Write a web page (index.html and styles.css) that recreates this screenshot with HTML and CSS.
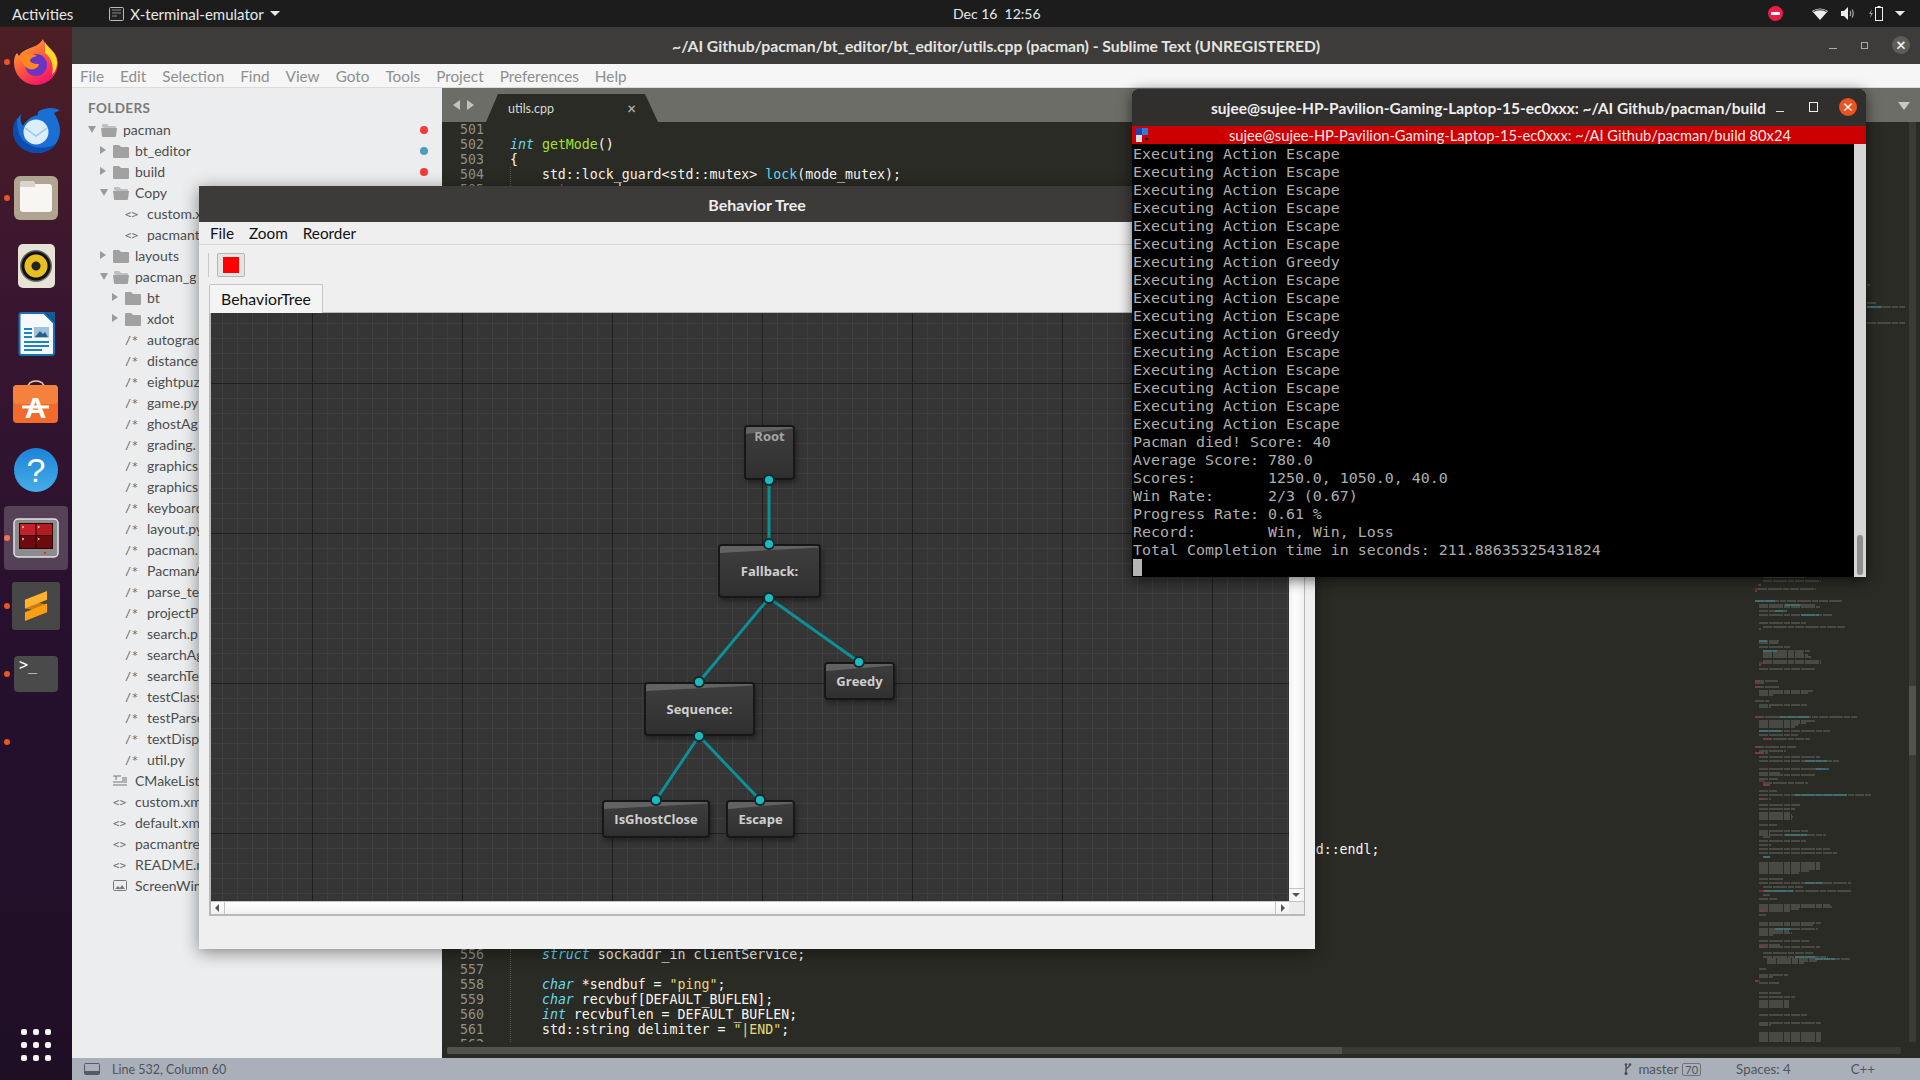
FILE: index.html
```html
<!DOCTYPE html>
<html lang="en">
<head>
  <meta charset="UTF-8"/>
  <title>Behavior Tree - Ubuntu desktop</title>
  <link rel="stylesheet" href="styles.css">
</head>
<body>
  <!-- shared folder icons -->
  <svg class="defs" width="0" height="0">
    <symbol id="fold" viewBox="0 0 16 14"><path d="M0 2q0-1 1-1h5l2 2h7q1 0 1 1v9q0 1-1 1H1q-1 0-1-1z"/></symbol>
    <symbol id="fold-open" viewBox="0 0 16 14"><path d="M1 4V2q0-1 1-1h4l2 2h6q1 0 1 1v1H3z" opacity=".6"/><path d="M0 5h16l-1 8q0 1-1 1H2q-1 0-1-1z"/></symbol>
  </svg>

  <!-- top bar -->
  <header class="topbar">
    <span class="activities">Activities</span>
    <span class="app-menu">
      <svg width="15" height="14" viewBox="0 0 15 14"><rect x=".5" y=".5" width="14" height="13" rx="1" fill="#222" stroke="#bbb"/><path d="M3 3h9M3 6h9M3 9h5" stroke="#888"/></svg>
      X-terminal-emulator
      <i class="caret"></i>
    </span>
    <span class="clock">Dec 16&nbsp;&nbsp;12:56</span>
    <span class="tray">
      <svg class="t-noentry" width="15" height="15" viewBox="0 0 15 15"><circle cx="7.5" cy="7.5" r="7.5" fill="#ed1c47"/><rect x="3" y="6" width="9" height="3" fill="#fff"/></svg>
      <svg class="t-wifi" width="16" height="12" viewBox="0 0 16 12"><path d="M0 3Q8-2 16 3L8 12z" fill="#eee"/><path d="M1.5 3.5Q8 0 14.500 3.500" fill="none" stroke="#1c1c1c"/></svg>
      <svg class="t-vol" width="14" height="13" viewBox="0 0 14 13"><path d="M0 4h3l4-4v13l-4-4H0z" fill="#eee"/><path d="M9 4q1.500 2.500 0 5M11 2.500q2.500 4 0 8" fill="none" stroke="#aaa" stroke-width="1.200"/></svg>
      <svg class="t-bat" width="15" height="15" viewBox="0 0 15 15"><path d="M3 3 0 8h2l-1 4 3-5H2z" fill="#999"/><path d="M8.500 0h3v1h-3z" fill="#eee"/><rect x="6.500" y="1.500" width="7" height="13" fill="none" stroke="#eee"/></svg>
      <i class="caret t-caret"></i>
    </span>
  </header>

  <div class="desk">
    <!-- dock -->
    <nav class="dock">
      <div class="slot run">
        <svg width="46" height="46" viewBox="0 0 46 46">
          <defs>
            <linearGradient id="ff" x1="0" y1="0" x2=".6" y2="1"><stop offset="0" stop-color="#ffbd30"/><stop offset=".55" stop-color="#ff5a3c"/><stop offset="1" stop-color="#f5156c"/></linearGradient>
          </defs>
          <path d="M30 0c1 6 15 12 15 24a22 22 0 1 1-44 0c0-5 1-8 3-10l2 3c2-4 6-6 9-7 4-2 11-3 15-10z" fill="url(#ff)"/>
          <path d="M32 3c1 5 12 10 12 20 0 6-2 10-5 13 2-8 0-17-7-22z" fill="#ffd92e"/>
          <circle cx="23" cy="26" r="11" fill="#6b34c4"/>
          <path d="M7 19c5-5 13-5 17-2-5 1-7 3-7 5 2 3 7 3 9 3-1 5-7 7-12 4-3-2-5-6-7-10z" fill="#ff8a1c"/>
        </svg>
      </div>
      <div class="slot">
        <svg width="49" height="46" viewBox="0 0 49 46">
          <path d="M32 2c5-2 11-1 16 1l-6 3c4 6 6 12 6 18a23 22 0 0 1-46 0c0-5 1-10 4-13l3-4c-1 6 0 9 2 12 3-6 9-10 15-11-1-3 1-5 6-6z" fill="#1a6fd4"/>
          <path d="M1 24c0 12 10 22 24 22 8 0 15-3 19-9-9 5-20 5-28 0C9 33 5 26 5 12 2 15 1 19 1 24z" fill="#0b4cae"/>
          <circle cx="24" cy="25" r="12.500" fill="#dceefc"/>
          <path d="M13 21l11 8 11-8" fill="none" stroke="#9cc6ec" stroke-width="1.500"/>
        </svg>
      </div>
      <div class="slot run">
        <div class="ic-files"><span class="ic-folder"></span></div>
      </div>
      <div class="slot">
        <div class="ic-rhythm"><span class="ic-cone"></span></div>
      </div>
      <div class="slot">
        <svg width="37" height="44" viewBox="0 0 37 44">
          <path d="M1.500 3q0-2 2-2H26l10 10v30q0 2-2 2H3.500q-2 0-2-2z" fill="#f6f8fa" stroke="#1273b5" stroke-width="2"/>
          <path d="M27 0h10v10z" fill="#0f5f96"/>
          <path d="M6 17h8M6 21h8M6 25h8M6 30h25M6 34h25M6 38h18" stroke="#1b82c5" stroke-width="2"/>
          <rect x="16" y="15" width="15" height="11" fill="#9ec3de"/>
          <path d="M17 25l5-6 3 3 2-2 3 5z" fill="#2b5f87"/>
        </svg>
      </div>
      <div class="slot">
        <svg width="46" height="44" viewBox="0 0 46 44">
          <path d="M15 8q0-7 8-7t8 7" fill="none" stroke="#f4c9a8" stroke-width="1.500"/>
          <rect y="5" width="45" height="38" rx="4" fill="#f26b2a"/>
          <rect y="5" width="45" height="19" rx="4" fill="#f5813d"/>
          <text class="ic-a" x="22.500" y="38">A</text>
          <path d="M9 27h27" stroke="#fff" stroke-width="3"/>
        </svg>
      </div>
      <div class="slot">
        <div class="ic-help">?</div>
      </div>
      <div class="slot run active">
        <svg width="46" height="40" viewBox="0 0 46 40">
          <rect x="1" y="1" width="44" height="38" rx="4" fill="#8b8d8c" stroke="#e3e3e3" stroke-width="1.500"/>
          <rect x="6" y="5" width="34" height="26" fill="#2a0505"/>
          <rect x="7" y="6" width="15.500" height="11" fill="#c2202a"/>
          <rect x="23.500" y="6" width="15.500" height="11" fill="#b31a22"/>
          <rect x="7" y="18" width="15.500" height="12" fill="#6d0a0e"/>
          <rect x="23.500" y="18" width="15.500" height="12" fill="#6d0a0e"/>
          <path d="M9 8l2 1-2 1M24.500 8l2 1-2 1M9 20l2 1-2 1M24.500 20l2 1-2 1" fill="none" stroke="#fff" stroke-width=".7"/>
          <circle cx="32" cy="35" r="1.200" fill="#ef2b2b"/>
        </svg>
      </div>
      <div class="slot run">
        <div class="ic-sublime">
          <svg width="24" height="30" viewBox="0 0 26 24" preserveAspectRatio="none"><path d="M1 7l24 4v6L1 14z" fill="#c77d12"/><path d="M25 0v7L1 14V7z" fill="#ffb32c"/><path d="M1 17l24-7v7L1 24z" fill="#ff9f14"/></svg>
        </div>
      </div>
      <div class="slot run">
        <div class="ic-term">&gt;_</div>
      </div>
      <div class="slot run"></div>
      <div class="apps-btn">
        <i></i><i></i><i></i><i></i><i></i><i></i><i></i><i></i><i></i>
      </div>
    </nav>

    <!-- sublime text -->
    <section class="sublime">
      <div class="wm-title">
        <span>~/AI Github/pacman/bt_editor/bt_editor/utils.cpp (pacman) - Sublime Text (UNREGISTERED)</span>
        <div class="wm-btns">
          <i class="b-min"></i><i class="b-max"></i><i class="b-close">×</i>
        </div>
      </div>
      <div class="menubar">
        <span>File</span><span>Edit</span><span>Selection</span><span>Find</span><span>View</span><span>Goto</span><span>Tools</span><span>Project</span><span>Preferences</span><span>Help</span>
      </div>

      <div class="main">
        <aside class="sidebar">
          <div class="side-head">FOLDERS</div>
          <div class="row d0"><i class="tw open"></i><svg class="fic"><use href="#fold-open"/></svg><span>pacman</span><b class="dot red"></b></div>
          <div class="row d1"><i class="tw"></i><svg class="fic"><use href="#fold"/></svg><span>bt_editor</span><b class="dot teal"></b></div>
          <div class="row d1"><i class="tw"></i><svg class="fic"><use href="#fold"/></svg><span>build</span><b class="dot red"></b></div>
          <div class="row d1"><i class="tw open"></i><svg class="fic"><use href="#fold-open"/></svg><span>Copy</span></div>
          <!-- names below stop where the behavior tree window covers them -->
          <div class="row d2"><i class="tw none"></i><em>&lt;&gt;</em><span>custom.x</span></div>
          <div class="row d2"><i class="tw none"></i><em>&lt;&gt;</em><span>pacmant</span></div>
          <div class="row d1"><i class="tw"></i><svg class="fic"><use href="#fold"/></svg><span>layouts</span></div>
          <div class="row d1"><i class="tw open"></i><svg class="fic"><use href="#fold-open"/></svg><span>pacman_g</span></div>
          <div class="row d2"><i class="tw"></i><svg class="fic"><use href="#fold"/></svg><span>bt</span></div>
          <div class="row d2"><i class="tw"></i><svg class="fic"><use href="#fold"/></svg><span>xdot</span></div>
          <div class="row d2"><i class="tw none"></i><em>/*</em><span>autograd</span></div>
          <div class="row d2"><i class="tw none"></i><em>/*</em><span>distance</span></div>
          <div class="row d2"><i class="tw none"></i><em>/*</em><span>eightpuz</span></div>
          <div class="row d2"><i class="tw none"></i><em>/*</em><span>game.py</span></div>
          <div class="row d2"><i class="tw none"></i><em>/*</em><span>ghostAg</span></div>
          <div class="row d2"><i class="tw none"></i><em>/*</em><span>grading.</span></div>
          <div class="row d2"><i class="tw none"></i><em>/*</em><span>graphics</span></div>
          <div class="row d2"><i class="tw none"></i><em>/*</em><span>graphics</span></div>
          <div class="row d2"><i class="tw none"></i><em>/*</em><span>keyboard</span></div>
          <div class="row d2"><i class="tw none"></i><em>/*</em><span>layout.py</span></div>
          <div class="row d2"><i class="tw none"></i><em>/*</em><span>pacman.</span></div>
          <div class="row d2"><i class="tw none"></i><em>/*</em><span>PacmanA</span></div>
          <div class="row d2"><i class="tw none"></i><em>/*</em><span>parse_te</span></div>
          <div class="row d2"><i class="tw none"></i><em>/*</em><span>projectP</span></div>
          <div class="row d2"><i class="tw none"></i><em>/*</em><span>search.p</span></div>
          <div class="row d2"><i class="tw none"></i><em>/*</em><span>searchAg</span></div>
          <div class="row d2"><i class="tw none"></i><em>/*</em><span>searchTe</span></div>
          <div class="row d2"><i class="tw none"></i><em>/*</em><span>testClass</span></div>
          <div class="row d2"><i class="tw none"></i><em>/*</em><span>testParse</span></div>
          <div class="row d2"><i class="tw none"></i><em>/*</em><span>textDisp</span></div>
          <div class="row d2"><i class="tw none"></i><em>/*</em><span>util.py</span></div>
          <div class="row d1"><i class="tw none"></i>
            <svg class="pic" width="14" height="11" viewBox="0 0 14 11"><path d="M0 1h8M3 1v4M9 3h5M9 5h5M0 7h14M0 10h14" fill="none" stroke="#777"/></svg>
            <span>CMakeLists</span></div>
          <div class="row d1"><i class="tw none"></i><em>&lt;&gt;</em><span>custom.xm</span></div>
          <div class="row d1"><i class="tw none"></i><em>&lt;&gt;</em><span>default.xm</span></div>
          <div class="row d1"><i class="tw none"></i><em>&lt;&gt;</em><span>pacmantre</span></div>
          <div class="row d1"><i class="tw none"></i><em>&lt;&gt;</em><span>README.m</span></div>
          <div class="row d1"><i class="tw none"></i>
            <svg class="pic" width="14" height="11" viewBox="0 0 14 11"><rect x=".5" y=".5" width="13" height="10" rx="1" fill="none" stroke="#777"/><path d="M2 9l3-3 2 2 2-3 3 4z" fill="#777"/></svg>
            <span>ScreenWin</span></div>
        </aside>

        <div class="editor">
          <div class="tabbar">
            <span class="tab-nav"><i class="nav-l"></i><i class="nav-r"></i></span>
            <div class="tab"><span>utils.cpp</span><b>×</b></div>
            <i class="tab-drop"></i>
          </div>
          <div class="edit-body">
            <!-- lines 506-555 sit behind the behavior tree window -->
            <div class="gutter">
<pre>501
502
503
504
505</pre>
<pre class="g-after">556
557
558
559
560
561
562</pre>
            </div>
            <div class="code-wrap">
              <i class="guide"></i>
<pre class="code">

<span class="ty">int</span> <span class="fn">getMode</span>()
{
    std::lock_guard&lt;std::mutex&gt; <span class="cy">lock</span>(mode_mutex);
    <span class="kw">return</span> mode;</pre>
<pre class="code far">std::endl;</pre>
<pre class="code c-after">    <span class="ty">struct</span> sockaddr_in clientService;

    <span class="ty">char</span> *sendbuf = <span class="st">"ping"</span>;
    <span class="ty">char</span> recvbuf[DEFAULT_BUFLEN];
    <span class="ty">int</span> recvbuflen = DEFAULT_BUFLEN;
    std::string delimiter = <span class="st">"|END"</span>;</pre>
            </div>
            <svg class="minimap" width="154" height="920" viewBox="0 0 154 920">
              <path class="mm-grey" d="M112 163h3M112 181h10M112 185h38M112 201h38M8 455h43M8 459h58M3 463h3M3 467h58M0 469h2M0 479h87M4 483h57M4 485h61M4 489h24M4 493h74M4 501h47M8 505h82M4 507h2M4 519h20M4 521h19M4 525h32M8 529h47M8 531h40M8 533h45M8 535h48M8 539h58M8 541h58M4 543h2M4 547h57M0 559h23M0 561h10M0 565h24M4 569h54M4 571h49M4 573h14M0 579h14M4 583h48M4 585h12M0 595h102M4 599h57M4 601h47M4 603h39M4 605h36M4 609h71M4 613h39M8 617h47M0 625h42M4 629h27M0 631h13M4 635h61M4 639h80M4 647h66M4 651h21M4 653h57M4 657h19M8 661h45M8 663h7M4 669h18M4 673h112M4 677h12M4 683h41M4 687h36M4 691h32M4 693h33M4 695h34M4 697h33M4 703h18M4 709h49M4 711h11M4 713h67M8 715h7M4 719h47M4 723h12M4 727h71M4 731h78M8 735h7M4 741h61M4 743h61M4 745h61M4 747h61M4 749h50M4 751h40M4 757h25M4 761h92M8 765h40M8 769h89M8 773h7M4 777h18M4 783h71M4 785h73M4 787h40M4 789h32M4 793h7M4 801h62M4 803h54M4 807h59M4 809h30M4 811h33M4 813h14M4 819h50M4 823h21M4 825h61M8 831h50M8 835h65M12 837h83M12 839h50M12 841h37M4 847h7M4 853h29M4 855h14M0 859h3M4 861h20M4 871h22M4 875h36M4 879h30M4 881h30M4 883h30M4 885h30M4 893h48M4 901h62M4 903h12M4 911h62M4 913h62M4 915h62M4 917h62M4 919h62"/>
              <path class="mm-teal" d="M112 185h14M0 479h20M30 483h16M20 489h12M46 493h18M4 519h8M8 529h14M24 595h30M4 609h22M50 639h22M60 647h14M40 673h30M66 673h26M8 769h30M8 735h7M30 713h22M20 807h16M50 761h18M40 835h20M60 837h20"/>
              <path class="mm-pink" d="M0 467h5M0 559h5M0 565h5M0 595h6M0 625h6M0 631h8M4 541h5M4 659h6M4 677h5M4 769h6M4 789h5M4 825h6M0 859h5M8 617h8M8 663h6"/>
            </svg>
            <div class="vscroll"><i></i></div>
          </div>
          <div class="hscroll"><i></i></div>
        </div>
      </div>

      <footer class="status">
        <svg class="st-panel" width="16" height="12" viewBox="0 0 16 12"><rect x=".5" y=".5" width="15" height="11" rx="1" fill="none" stroke="#555b63"/><rect x="1" y="8" width="14" height="3" fill="#555b63"/></svg>
        <span class="st-pos">Line 532, Column 60</span>
        <span class="st-git">
          <svg width="8" height="12" viewBox="0 0 8 12"><path d="M2 1v10M6 1c0 4-4 3-4 6" fill="none" stroke="#474b52" stroke-width="1.400"/><circle cx="2" cy="10.500" r="1.500" fill="#474b52"/><circle cx="2" cy="1.500" r="1.300" fill="#474b52"/><circle cx="6" cy="1.500" r="1.300" fill="#474b52"/></svg>
          master <b>70</b>
        </span>
        <span class="st-spaces">Spaces: 4</span>
        <span class="st-lang">C++</span>
      </footer>
    </section>
  </div>

  <!-- behavior tree window -->
  <section class="bt-win">
    <div class="bt-title">Behavior Tree</div>
    <div class="bt-menu"><span>File</span><span>Zoom</span><span>Reorder</span></div>
    <div class="bt-tools"><i class="sep"></i><button class="stop"><i></i></button></div>
    <div class="bt-tabs"><span class="bt-tab">BehaviorTree</span></div>
    <div class="bt-frame">
      <div class="bt-view">
        <div class="canvas">
          <svg class="edges" width="1078" height="588">
            <path d="M558 167V231M558 285L488 369M558 285L648 349M488 423L445 487M488 423L549 487"/>
          </svg>
          <div class="node n-root"><span>Root</span></div>
          <div class="node n-fallback"><span>Fallback:</span></div>
          <div class="node n-greedy"><span>Greedy</span></div>
          <div class="node n-seq"><span>Sequence:</span></div>
          <div class="node n-ghost"><span>IsGhostClose</span></div>
          <div class="node n-escape"><span>Escape</span></div>
          <i class="port p1"></i><i class="port p2"></i><i class="port p3"></i><i class="port p4"></i>
          <i class="port p5"></i><i class="port p6"></i><i class="port p7"></i><i class="port p8"></i>
        </div>
        <div class="bt-vbar"><i class="arr-down"></i></div>
      </div>
      <div class="bt-hbar"><i class="arr-left"></i><span class="fill"></span><i class="arr-right"></i><span class="corner"></span></div>
    </div>
  </section>

  <!-- terminator -->
  <section class="term">
    <div class="term-title">
      <span>sujee@sujee-HP-Pavilion-Gaming-Laptop-15-ec0xxx: ~/AI Github/pacman/build</span>
      <i class="tb-min"></i><i class="tb-max"></i><i class="tb-close">×</i>
    </div>
    <div class="term-bar">
      <svg width="16" height="16" viewBox="0 0 16 16"><rect x="1" y="1" width="6" height="7" fill="#2a3fb0"/><rect x="7" y="1" width="6" height="7" fill="#2a7fd8"/><rect x="1" y="8" width="6" height="7" fill="#ddd"/><path d="M9 11h5l-2.500 3z" fill="#222"/></svg>
      <span>sujee@sujee-HP-Pavilion-Gaming-Laptop-15-ec0xxx: ~/AI Github/pacman/build 80x24</span>
    </div>
    <div class="term-body">
<pre class="term-text">Executing Action Escape
Executing Action Escape
Executing Action Escape
Executing Action Escape
Executing Action Escape
Executing Action Escape
Executing Action Greedy
Executing Action Escape
Executing Action Escape
Executing Action Escape
Executing Action Greedy
Executing Action Escape
Executing Action Escape
Executing Action Escape
Executing Action Escape
Executing Action Escape
Pacman died! Score: 40
Average Score: 780.0
Scores:        1250.0, 1050.0, 40.0
Win Rate:      2/3 (0.67)
Progress Rate: 0.61 %
Record:        Win, Win, Loss
Total Completion time in seconds: 211.88635325431824
<i class="cursor"></i></pre>
      <div class="term-scroll"><i></i></div>
    </div>
  </section>
</body>
</html>
```
FILE: styles.css
```css
* { box-sizing: border-box; }

body {
  margin: 0;
  width: 1920px;
  height: 1080px;
  overflow: hidden;
  position: relative;
  font-family: Lato, "Noto Sans", sans-serif;
  background: #2a2b25;
  display: flex;
  flex-direction: column;
}

i { font-style: normal; display: block; }
.defs { position: absolute; }

/* top bar */
.topbar {
  height: 27px;
  flex: none;
  background: #1c1c1c;
  color: #e8e8e8;
  font-size: 15px;
  display: flex;
  align-items: center;
  position: relative;
}
.activities { margin-left: 12px; }
.app-menu { margin-left: 36px; display: flex; align-items: center; gap: 6px; }
.caret {
  width: 0; height: 0;
  border-left: 5px solid transparent;
  border-right: 5px solid transparent;
  border-top: 5px solid #e8e8e8;
  margin-left: 0;
}
.clock { position: absolute; left: 953px; font-size: 14px; }
.tray { margin-left: auto; display: flex; align-items: center; padding-right: 15px; }
.t-noentry { margin-right: 29px; }
.t-wifi { margin-right: 13px; }
.t-vol { margin-right: 14px; }
.t-bat { margin-right: 11px; }

.desk { flex: 1; display: flex; min-height: 0; }

/* dock */
.dock {
  width: 72px;
  flex: none;
  padding-top: 1px;
  background: linear-gradient(#4d1e24, #3a1630 25%, #25102e 60%, #1f0f25);
  display: flex;
  flex-direction: column;
}
.slot {
  height: 68px;
  flex: none;
  display: flex;
  align-items: center;
  justify-content: center;
  position: relative;
}
.slot.run::before {
  content: "";
  position: absolute;
  left: 4px;
  top: 31px;
  width: 6px;
  height: 6px;
  border-radius: 50%;
  background: #e95420;
}
.slot.active::after {
  content: "";
  position: absolute;
  inset: 2px 4px;
  border-radius: 4px;
  background: rgba(255, 255, 255, .2);
}
.slot.active svg { position: relative; z-index: 1; }

.ic-files {
  width: 44px; height: 44px;
  background: #b0a590;
  border-radius: 6px;
  display: flex;
  align-items: center;
  justify-content: center;
}
.ic-folder {
  width: 32px; height: 28px;
  background: #f7f6f3;
  border-radius: 3px;
  position: relative;
}
.ic-folder::before {
  content: "";
  position: absolute;
  left: 0; top: -3px;
  width: 15px; height: 6px;
  background: #d8d4ca;
  border-radius: 2px 2px 0 0;
}
.ic-rhythm {
  width: 37px; height: 44px;
  background: #e6e2d6;
  border-radius: 5px;
  display: flex;
  align-items: center;
  justify-content: center;
}
.ic-cone {
  width: 32px; height: 32px;
  border-radius: 50%;
  background: radial-gradient(circle closest-side, #222 0 4px, #e8bf20 5px 11px, #111 12px 14px, #6c6c64 15px);
}
.ic-a {
  font: bold 30px "Liberation Sans", sans-serif;
  fill: #fff;
  text-anchor: middle;
}
.ic-help {
  width: 44px; height: 44px;
  border-radius: 50%;
  background: linear-gradient(#1d82d8, #45aee8);
  color: #fff;
  font: 34px/44px "Liberation Sans", sans-serif;
  text-align: center;
}
.ic-sublime {
  width: 48px; height: 48px;
  background: #474747;
  border-radius: 3px;
  display: flex;
  align-items: center;
  justify-content: center;
}
.ic-term {
  width: 44px; height: 36px;
  background: #4a4a4a;
  border-radius: 4px;
  color: #fff;
  font: 15px/18px "DejaVu Sans Mono", monospace;
  padding-left: 5px;
}
.apps-btn {
  margin-top: auto;
  margin-bottom: 19px;
  margin-left: 21px;
  width: 30px;
  display: grid;
  grid-template-columns: repeat(3, 6px);
  justify-content: space-between;
  row-gap: 7px;
}
.apps-btn i { height: 6px; border-radius: 2px; background: #f4f4f4; }

/* sublime window */
.sublime { flex: 1; display: flex; flex-direction: column; min-width: 0; }

.wm-title {
  height: 37px;
  flex: none;
  background: #3d3c3a;
  color: #e4e4e2;
  font-size: 15.700px;
  font-weight: 700;
  display: flex;
  align-items: center;
  justify-content: center;
  position: relative;
}
.wm-btns {
  position: absolute;
  right: 10px;
  top: 9px;
  display: flex;
  align-items: center;
  gap: 24px;
}
.b-min { width: 8px; height: 1px; background: #aaa; margin-top: 6px; }
.b-max { width: 7px; height: 7px; border: 1px solid #aaa; }
.b-close {
  width: 18px; height: 18px;
  border-radius: 50%;
  background: #5c5c5b;
  color: #eee;
  font-size: 17px;
  line-height: 17px;
  text-align: center;
}

.menubar {
  height: 24px;
  flex: none;
  background: #f6f6f6;
  border-bottom: 1px solid #dcdcdc;
  color: #8f8f8f;
  font-size: 15.300px;
  display: flex;
  align-items: center;
  gap: 16px;
  padding-left: 8px;
}

.main { flex: 1; display: flex; min-height: 0; }

/* sidebar */
.sidebar {
  width: 370px;
  flex: none;
  background: #ebedef;
  color: #4d4d4d;
  font-size: 14px;
  overflow: hidden;
}
.side-head {
  height: 31px;
  padding: 12px 0 0 16px;
  font-size: 13.500px;
  line-height: 17px;
  font-weight: 700;
  color: #7a7a7a;
  letter-spacing: .4px;
}
.row {
  height: 21px;
  display: flex;
  align-items: center;
  padding-right: 14px;
  white-space: nowrap;
}
.d0 { padding-left: 16px; }
.d1 { padding-left: 28px; }
.d2 { padding-left: 40px; }
/* keep names inside the part the behavior tree window leaves open */
.row:nth-child(n+6) span { overflow: hidden; }
.row:nth-child(n+6).d1 span { max-width: 64px; }
.row:nth-child(n+6).d2 span { max-width: 52px; }
.tw {
  width: 13px;
  height: 9px;
  flex: none;
  position: relative;
}
.tw::before {
  content: "";
  position: absolute;
  left: 0; top: 0;
  border-top: 4.500px solid transparent;
  border-bottom: 4.500px solid transparent;
  border-left: 6px solid #9b9b9b;
}
.tw.open::before {
  top: 1px;
  border-left: 4.500px solid transparent;
  border-right: 4.500px solid transparent;
  border-top: 7px solid #9b9b9b;
  border-bottom: 0;
}
.tw.none::before { display: none; }
.fic {
  width: 16px;
  height: 14px;
  flex: none;
  margin-right: 6px;
  fill: #a1a1a1;
}
.pic { flex: none; margin-right: 8px; }
.row em {
  width: 16px;
  margin-right: 6px;
  flex: none;
  font: 10.500px "DejaVu Sans Mono", monospace;
  color: #6a6a6a;
  letter-spacing: .5px;
}

.dot {
  width: 8px;
  height: 8px;
  border-radius: 50%;
  margin-left: auto;
}
.red { background: #f53a3a; }
.teal { background: #4b9fb8; }

/* editor */
.editor { flex: 1; min-width: 0; display: flex; flex-direction: column; background: #2a2b25; }
.tabbar {
  height: 34px;
  flex: none;
  background: #6d6d67;
  display: flex;
  position: relative;
  padding-top: 6px;
}
.tab-nav { display: flex; gap: 7px; padding: 6px 0 0 11px; width: 44px; }
.nav-l, .nav-r {
  width: 0; height: 0;
  border-top: 5px solid transparent;
  border-bottom: 5px solid transparent;
}
.nav-l { border-right: 7px solid #c2c2be; }
.nav-r { border-left: 7px solid #c2c2be; }
.tab {
  width: 172px;
  height: 28px;
  background: #2a2b25;
  clip-path: polygon(0 100%, 12px 0, 159px 0, 172px 100%);
  color: #d8d8d4;
  font-size: 12.500px;
  display: flex;
  align-items: center;
  justify-content: space-between;
  padding: 0 22px 0 22px;
}
.tab b { font-size: 15px; color: #a8a8a4; }
.tab-drop {
  position: absolute;
  right: 10px;
  top: 14px;
  border-left: 6px solid transparent;
  border-right: 6px solid transparent;
  border-top: 8px solid #c8c8c4;
}
.edit-body { flex: 1; min-height: 0; display: flex; overflow: hidden; }
pre { margin: 0; }
.gutter {
  width: 42px;
  flex: none;
  text-align: right;
  font: 13.250px/15px "DejaVu Sans Mono", monospace;
  color: #8f908a;
}
.gutter pre { font: inherit; }
.gutter .g-after { margin-top: 750px; }
.code-wrap { width: 1271px; flex: none; padding-left: 26px; position: relative; overflow: hidden; }
.code {
  font: 13.250px/15px "DejaVu Sans Mono", monospace;
  color: #f8f8f2;
}
/* line 549 is the only one of the covered lines that sticks out past the window */
.far { margin-top: 645px; padding-left: 99ch; }
.c-after { margin-top: 90px; }
.guide {
  position: absolute;
  left: 26px;
  top: 45px;
  bottom: 0;
  border-left: 1px dotted #5a5b55;
}
.ty { color: #66d9ef; font-style: italic; }
.fn { color: #a6e22e; }
.cy { color: #66d9ef; }
.kw { color: #f92672; }
.st { color: #e6db74; }

.minimap { flex: none; margin-left: 0; }
.minimap path { fill: none; stroke-width: 1.200; }
.mm-grey { stroke: #80817a; stroke-dasharray: 9 1 14 1 6 1; opacity: .75; }
.mm-teal { stroke: #3f8f9f; }
.mm-pink { stroke: #a8285a; }
.vscroll { width: 7px; flex: none; background: #3a3b35; margin-left: 0; position: relative; }
.vscroll i { height: 69px; margin-top: 564px; background: #52534d; }

.hscroll { height: 16px; flex: none; padding: 5px 19px 4px 5px; }
.hscroll i {
  height: 7px;
  border-radius: 2px;
  background: linear-gradient(90deg, #52534d 0 895px, #3a3b35 895px);
}

.status {
  height: 22px;
  flex: none;
  background: #a9b0ba;
  color: #50545b;
  font-size: 12.500px;
  display: flex;
  align-items: center;
  padding-left: 12px;
}
.st-panel { margin-right: 12px; }
.st-git { margin-left: auto; display: flex; align-items: center; gap: 4px; font-size: 13.300px; }
.st-git svg { margin-right: 2px; }
.st-git b {
  font-weight: 400;
  font-size: 11px;
  border: 1px solid #6f747c;
  border-radius: 2px;
  padding: 0 2px;
  line-height: 11px;
}
.st-spaces { margin-left: 35px; font-size: 13.300px; }
.st-lang { margin-left: 60px; margin-right: 45px; font-size: 13.300px; }

/* behavior tree window */
.bt-win {
  position: absolute;
  left: 199px;
  top: 186px;
  width: 1116px;
  height: 763px;
  background: #efefef;
  box-shadow: 0 3px 16px rgba(0, 0, 0, .45);
  display: flex;
  flex-direction: column;
  padding-bottom: 33px;
  font-size: 15.300px;
}
.bt-title {
  height: 36px;
  flex: none;
  background: #3c3b39;
  color: #eee;
  font-size: 16px;
  font-weight: 700;
  line-height: 38px;
  text-align: center;
  margin-bottom: 0;
}
.bt-menu {
  height: 23px;
  flex: none;
  border-bottom: 1px solid #d6d6d6;
  color: #111;
  display: flex;
  align-items: center;
  gap: 15px;
  padding-left: 11px;
}
.bt-tools {
  height: 39px;
  flex: none;
  display: flex;
  align-items: center;
  padding-left: 9px;
}
.sep { width: 1px; height: 24px; background: #c8c8c8; margin-right: 8px; }
.stop {
  width: 28px;
  height: 24px;
  padding: 0;
  border: 1px solid #b5b5b5;
  border-radius: 2px;
  background: #e4e4e4;
  display: flex;
  align-items: center;
  justify-content: center;
}
.stop i { width: 16px; height: 16px; background: #ff0000; }
.bt-tabs { height: 28px; flex: none; padding-left: 10px; position: relative; z-index: 1; }
.bt-tab {
  display: block;
  width: 114px;
  height: 29px;
  background: #f4f4f4;
  border: 1px solid #c4c4c4;
  border-bottom: 0;
  border-radius: 2px 2px 0 0;
  color: #111;
  font-size: 15.800px;
  text-align: center;
  line-height: 27px;
}
.bt-frame {
  flex: 1;
  margin: 0 10px;
  border: 1px solid #b8b8b8;
  border-width: 1px 1px 2px 2px;
  display: flex;
  flex-direction: column;
  min-height: 0;
}
.bt-view { flex: 1; display: flex; min-height: 0; }
.canvas {
  flex: 1;
  position: relative;
  overflow: hidden;
  background-color: #353535;
  background-image:
    linear-gradient(#1f1f1f 1px, transparent 1px),
    linear-gradient(90deg, #1f1f1f 1px, transparent 1px),
    linear-gradient(#3f3f3f 1px, transparent 1px),
    linear-gradient(90deg, #3f3f3f 1px, transparent 1px);
  background-size: 150px 150px, 150px 150px, 15px 15px, 15px 15px;
  background-position: 0 70px, 101px 0, 0 10px, 11px 0;
}
.edges { position: absolute; left: 0; top: 0; }
.edges path { fill: none; stroke: #0b9097; stroke-width: 3; }
.node {
  position: absolute;
  border: 2px solid #171717;
  border-radius: 4px;
  background: linear-gradient(#3e3e3e, #333 80%, #2f2f2f);
  box-shadow: 2px 3px 5px rgba(0, 0, 0, .35);
  color: #cfcfcf;
  font: 700 13px "Open Sans", sans-serif;
  display: flex;
  align-items: center;
  justify-content: center;
  overflow: hidden;
}
.node::before {
  content: "";
  position: absolute;
  left: 0; top: 0; right: 0;
  height: 7px;
  background: #626262;
  clip-path: polygon(0 0, 100% 0, 100% 20%, 0 100%);
}
.node span { position: relative; }
.n-root { left: 533px; top: 112px; width: 51px; height: 55px; align-items: flex-start; color: #a5a5a5; }
.n-fallback { left: 507px; top: 231px; width: 103px; height: 54px; }
.n-greedy { left: 613px; top: 349px; width: 71px; height: 38px; }
.n-seq { left: 433px; top: 369px; width: 111px; height: 54px; }
.n-ghost { left: 391px; top: 487px; width: 108px; height: 38px; }
.n-escape { left: 515px; top: 487px; width: 69px; height: 38px; }
.port {
  position: absolute;
  width: 12px;
  height: 12px;
  margin: -6px 0 0 -6px;
  border-radius: 50%;
  background: #1bbcc0;
  border: 2px solid #15282a;
}
.p1 { left: 558px; top: 167px; }
.p2 { left: 558px; top: 231px; }
.p3 { left: 558px; top: 285px; }
.p4 { left: 648px; top: 349px; }
.p5 { left: 488px; top: 369px; }
.p6 { left: 488px; top: 423px; }
.p7 { left: 445px; top: 487px; }
.p8 { left: 549px; top: 487px; }

.bt-vbar {
  width: 15px;
  flex: none;
  background: linear-gradient(90deg, #f0f0f0, #fdfdfd 40%, #f2f2f2);
  position: relative;
}
.arr-down {
  position: absolute;
  left: 0; right: 0; bottom: 0;
  height: 13px;
  border-top: 1px solid #c4c4c4;
}
.arr-down::after {
  content: "";
  position: absolute;
  left: 3px; top: 4px;
  border-left: 4px solid transparent;
  border-right: 4px solid transparent;
  border-top: 4px solid #555;
}
.bt-hbar {
  height: 13px;
  flex: none;
  display: flex;
  background: linear-gradient(#fff, #f1f1f1);
  border-top: 1px solid #c4c4c4;
}
.bt-hbar .fill { flex: 1; }
.arr-left, .arr-right { width: 14px; flex: none; position: relative; }
.arr-left { border-right: 1px solid #c4c4c4; }
.arr-right { border-left: 1px solid #c4c4c4; }
.arr-left::after, .arr-right::after {
  content: "";
  position: absolute;
  top: 2px;
  border-top: 4px solid transparent;
  border-bottom: 4px solid transparent;
}
.arr-left::after { left: 4px; border-right: 4px solid #555; }
.arr-right::after { left: 5px; border-left: 4px solid #555; }
.corner { width: 15px; flex: none; background: #ececec; }

/* terminal */
.term {
  position: absolute;
  left: 1132px;
  top: 89px;
  width: 734px;
  height: 488px;
  background: #000;
  border-radius: 8px 8px 0 0;
  box-shadow: 0 3px 14px rgba(0, 0, 0, .6);
  display: flex;
  flex-direction: column;
  overflow: hidden;
}
.term-title {
  height: 37px;
  flex: none;
  background: #302f2d;
  color: #eee;
  font-size: 15.500px;
  font-weight: 700;
  display: flex;
  align-items: center;
  padding-left: 79px;
  position: relative;
}
.tb-min { position: absolute; left: 644px; top: 22px; width: 8px; height: 1px; background: #ddd; }
.tb-max { position: absolute; left: 677px; top: 13px; width: 9px; height: 10px; border: 1px solid #eee; }
.tb-close {
  position: absolute;
  left: 707px;
  top: 9px;
  width: 18px;
  height: 18px;
  border-radius: 50%;
  background: #e95420;
  color: #fff;
  font-size: 18px;
  font-weight: 400;
  line-height: 17px;
  text-align: center;
}
.term-bar {
  height: 18px;
  flex: none;
  background: #cc0000;
  color: #f2e8e8;
  font-size: 14.700px;
  display: flex;
  align-items: center;
}
.term-bar svg { flex: none; margin-left: 3px; }
.term-bar span { margin-left: 78px; }
.term-body { flex: 1; display: flex; min-height: 0; }
.term-text {
  flex: 1;
  padding: 1px 0 0 1px;
  font: 14.950px/18px "DejaVu Sans Mono", monospace;
  color: #aeaeae;
  position: relative;
}
.cursor { width: 9px; height: 17px; background: #b5b5b5; display: inline-block; vertical-align: top; }
.term-scroll { width: 12px; flex: none; background: #d6d6d6; position: relative; }
.term-scroll i {
  position: absolute;
  left: 3px;
  right: 3px;
  bottom: 2px;
  height: 40px;
  border-radius: 3px;
  background: #8e8e8e;
}
```
